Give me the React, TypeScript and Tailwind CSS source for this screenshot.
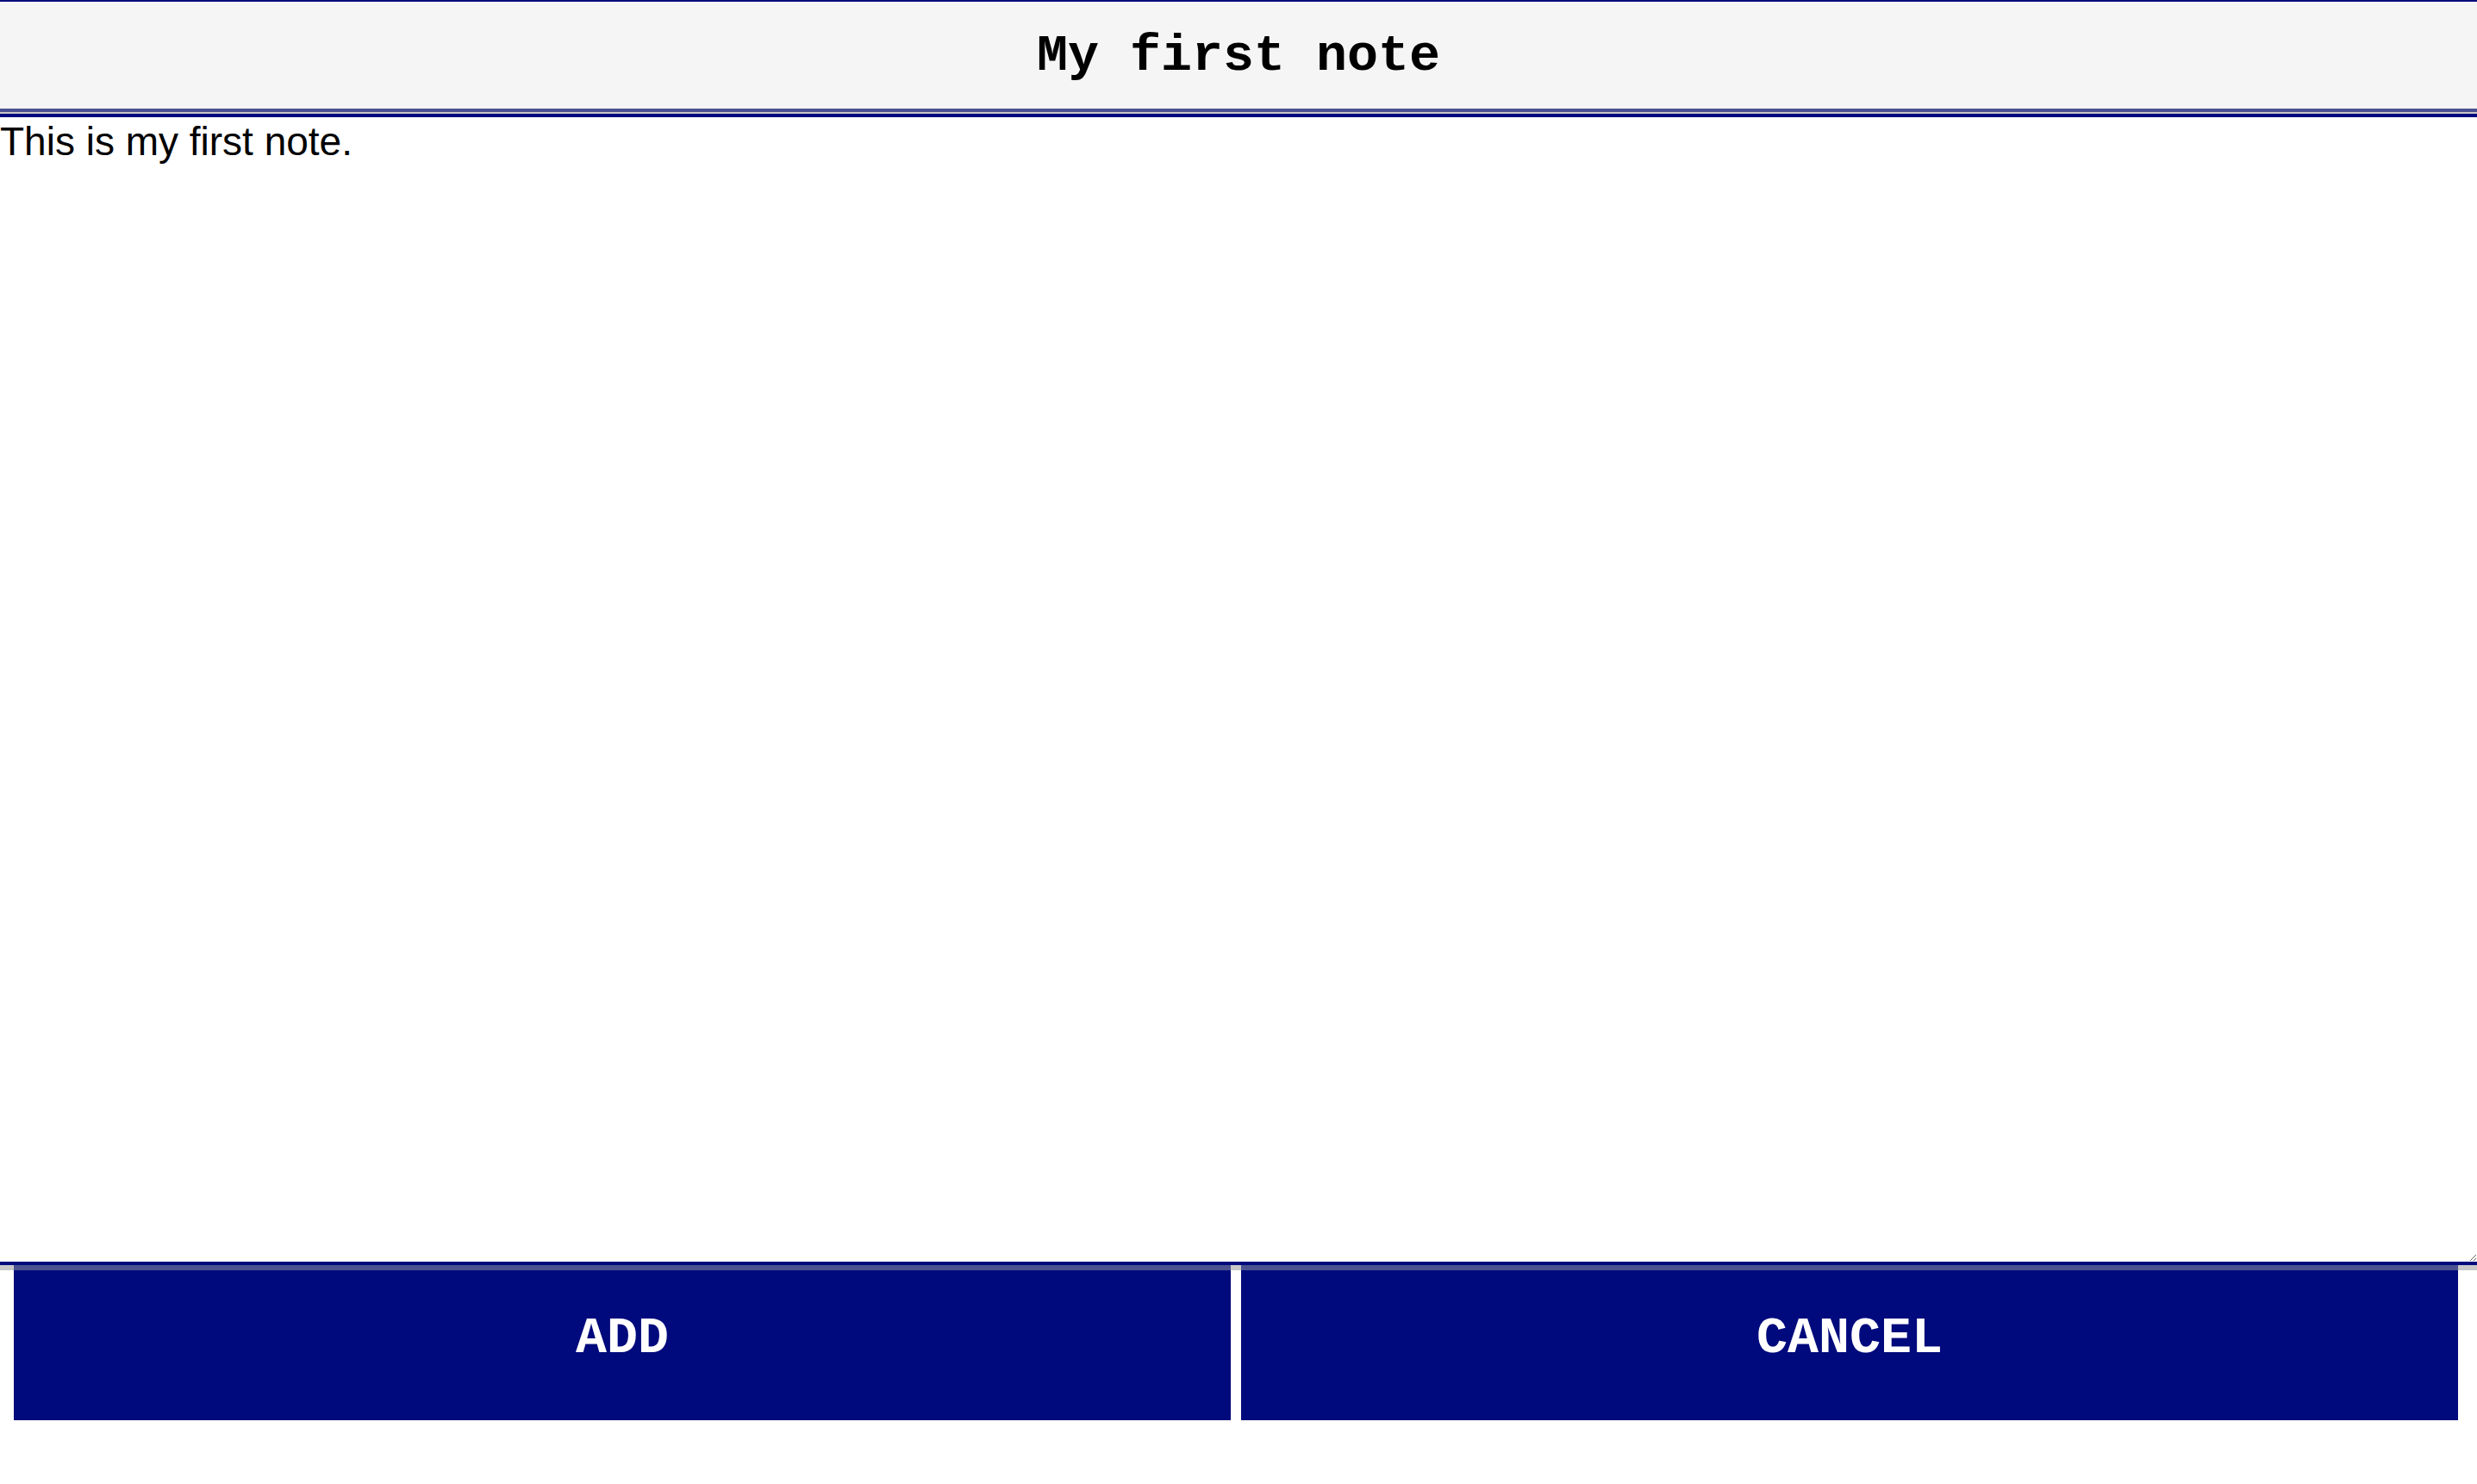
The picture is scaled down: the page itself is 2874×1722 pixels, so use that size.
import { useState } from "react";

// Note editor: title bar, body textarea, action buttons
export default function App() {
    const [body, setBody] = useState("This is my first note.");

    return (
        <div className="min-h-screen w-full bg-white">
            {/* Title bar */}
            <div className="h-[126px] border-t-2 border-[#000a7c] bg-[#f5f5f5] flex items-center justify-center">
                <h1 className="font-['Liberation_Mono','Courier_New',monospace] font-bold text-[60px] leading-none text-black pt-[2px]">
                    My first note
                </h1>
            </div>
            <div className="h-[4px] bg-[#4b5290]" />
            <div className="h-[2px] bg-[#c8c8c8]" />

            {/* Body */}
            <textarea
                value={body}
                onChange={(e) => setBody(e.target.value)}
                className="block w-full h-[1336px] border-y-4 border-[#000a7c] bg-white pt-[5px] text-[46px] leading-[47px] text-black outline-none font-['Liberation_Sans',Arial,sans-serif]"
            />

            {/* Actions */}
            <div className="flex gap-[12px] pl-[16px] bg-[linear-gradient(#c8c8c8_0_6px,white_6px)]">
                <button className="w-[1412px] h-[180px] border-t-[6px] border-[#4b5290] bg-[#000a7c] pb-[16px] text-white font-['Liberation_Mono','Courier_New',monospace] font-bold text-[60px]">
                    ADD
                </button>
                <button className="w-[1412px] h-[180px] border-t-[6px] border-[#4b5290] bg-[#000a7c] pb-[16px] text-white font-['Liberation_Mono','Courier_New',monospace] font-bold text-[60px]">
                    CANCEL
                </button>
            </div>
        </div>
    );
}
